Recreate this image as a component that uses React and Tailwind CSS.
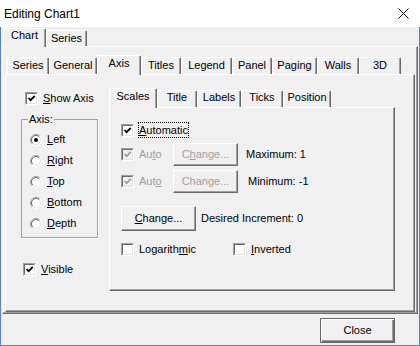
import React from 'react';

const U = ({ children }) => <span className="underline underline-offset-[1px]">{children}</span>;

const raised =
  'border border-t-white border-l-white border-r-[#696969] border-b-[#696969] shadow-[inset_-1px_-1px_#a0a0a0]';

function CheckBox({ checked, disabled }) {
  return (
    <span className="flex h-[13px] w-[13px] shrink-0 items-center justify-center border border-t-[#a0a0a0] border-l-[#a0a0a0] border-r-white border-b-white">
      <span
        className={`flex h-[11px] w-[11px] items-center justify-center border border-t-[#696969] border-l-[#696969] border-r-[#e3e3e3] border-b-[#e3e3e3] ${
          disabled ? 'bg-[#f0f0f0]' : 'bg-white'
        }`}
      >
        {checked && (
          <svg width="9" height="9" viewBox="0 0 9 9">
            <path d="M1.5 4 L3.6 6.2 L7.8 1.8" stroke={disabled ? '#a0a0a0' : '#000'} strokeWidth="1.8" fill="none" />
          </svg>
        )}
      </span>
    </span>
  );
}

function Radio({ checked }) {
  return (
    <svg width="12" height="12" viewBox="0 0 12 12" className="shrink-0">
      <circle cx="6" cy="6" r="5" fill="#fff" />
      <path d="M2.1 9.9 A5.5 5.5 0 0 1 9.9 2.1" stroke="#a0a0a0" fill="none" />
      <path d="M2.8 9.2 A4.5 4.5 0 0 1 9.2 2.8" stroke="#696969" fill="none" />
      <path d="M9.9 2.1 A5.5 5.5 0 0 1 2.1 9.9" stroke="#ffffff" fill="none" />
      <path d="M9.2 2.8 A4.5 4.5 0 0 1 2.8 9.2" stroke="#e3e3e3" fill="none" />
      {checked && <circle cx="6" cy="6" r="2" fill="#000" />}
    </svg>
  );
}

function Tab({ label, className }) {
  return (
    <div
      className={`flex shrink-0 justify-center rounded-t-[2px] border-l border-t border-r border-white border-r-[#696969] shadow-[inset_-1px_0_#a0a0a0] leading-[13px] ${className}`}
    >
      {label}
    </div>
  );
}

function Btn({ children, className, disabled }) {
  return (
    <div
      className={`flex shrink-0 items-center justify-center ${raised} ${disabled ? 'text-[#a0a0a0]' : 'text-black'} ${className}`}
    >
      {children}
    </div>
  );
}

const innerTabs = [
  { label: 'Series', w: 'w-[42px]' },
  { label: 'General', w: 'w-[48px]' },
  { label: 'Axis', w: 'w-[44px]', sel: true },
  { label: 'Titles', w: 'w-[40px]' },
  { label: 'Legend', w: 'w-[51px]' },
  { label: 'Panel', w: 'w-[40px]' },
  { label: 'Paging', w: 'w-[45px]' },
  { label: 'Walls', w: 'w-[42px]' },
  { label: '3D', w: 'w-[42px]' },
];

const subTabs = [
  { label: 'Scales', w: 'w-[48px]', sel: true },
  { label: 'Title', w: 'w-[40px]' },
  { label: 'Labels', w: 'w-[44px]' },
  { label: 'Ticks', w: 'w-[42px]' },
  { label: 'Position', w: 'w-[48px]' },
];

const axes = [
  { pre: '', u: 'L', post: 'eft', checked: true },
  { pre: '', u: 'R', post: 'ight' },
  { pre: '', u: 'T', post: 'op' },
  { pre: '', u: 'B', post: 'ottom' },
  { pre: '', u: 'D', post: 'epth' },
];

export default function App() {
  return (
    <div className="flex h-[346px] w-[420px] flex-col overflow-hidden bg-[#f0f0f0] font-['Liberation_Sans',Arial,sans-serif] text-[11px] text-black">
      {/* title bar */}
      <div className="flex h-[27px] shrink-0 items-center justify-between bg-white pl-[4px] pr-[11px] text-[12px]">
        <span>Editing Chart1</span>
        <svg width="11" height="11" viewBox="0 0 11 11">
          <path d="M0.5 0.5 L10.5 10.5 M10.5 0.5 L0.5 10.5" stroke="#000" strokeWidth="1" />
        </svg>
      </div>

      <div className="flex flex-1 flex-col border-x border-b border-[#5a80c8]">
        <div className="mx-px flex flex-col">
          {/* outer tabs */}
          <div className="flex h-[19px] items-end pl-px">
            <Tab label="Chart" className="relative z-10 -mb-px h-[19px] w-[43px] bg-[#f0f0f0]" />
            <Tab label="Series" className="h-[16px] w-[41px] pt-px" />
          </div>

          <div className={`flex h-[268px] flex-col px-[2px] ${raised}`}>
            {/* inner tabs */}
            <div className="mt-[7px] flex h-[20px] items-end pl-[2px]">
              {innerTabs.map((t) => (
                <Tab
                  key={t.label}
                  label={t.label}
                  className={`${t.w} pt-px ${t.sel ? 'relative z-10 -mb-px h-[20px] bg-[#f0f0f0]' : 'h-[17px]'}`}
                />
              ))}
            </div>

            <div className={`flex h-[238px] ${raised}`}>
              {/* left column */}
              <div className="flex w-[103px] shrink-0 flex-col">
                <div className="ml-[19px] mt-[17px] flex h-[13px] items-center">
                  <CheckBox checked />
                  <span className="ml-[5px]">
                    <U>S</U>how Axis
                  </span>
                </div>

                <div className="relative ml-[15px] mt-[14px] flex w-[77px] flex-col border border-[#a0a0a0] pb-[3px] pt-[9px] shadow-[1px_1px_0_#fff]">
                  <span className="absolute -top-[7px] left-[6px] bg-[#f0f0f0] px-px leading-[13px]">Axis:</span>
                  {axes.map((a) => (
                    <div key={a.post} className="flex h-[21px] items-center pl-[8px]">
                      <Radio checked={a.checked} />
                      <span className="ml-[5px]">
                        <U>{a.u}</U>
                        {a.post}
                      </span>
                    </div>
                  ))}
                </div>

                <div className="ml-[17px] mt-[25px] flex h-[13px] items-center">
                  <CheckBox checked />
                  <span className="ml-[5px]">
                    <U>V</U>isible
                  </span>
                </div>
              </div>

              {/* right column */}
              <div className="flex flex-col">
                <div className="mt-[12px] flex h-[20px] items-end">
                  {subTabs.map((t) => (
                    <Tab
                      key={t.label}
                      label={t.label}
                      className={`${t.w} ${t.sel ? 'relative z-10 -mb-px h-[20px] bg-[#f0f0f0] pt-px' : 'h-[17px]'}`}
                    />
                  ))}
                </div>

                <div className={`flex h-[184px] w-[286px] flex-col pl-[11px] ${raised}`}>
                  <div className="mt-[14px] flex h-[16px] items-center">
                    <CheckBox checked />
                    <span className="ml-[4px] h-[16px] border border-dotted border-black leading-[14px]">
                      <U>A</U>utomatic
                    </span>
                  </div>

                  <div className="mt-[5px] flex h-[23px] items-center">
                    <div className="flex w-[52px] items-center">
                      <CheckBox checked disabled />
                      <span className="ml-[5px] text-[#a0a0a0]">
                        Au<U>t</U>o
                      </span>
                    </div>
                    <Btn disabled className="h-[23px] w-[65px]">
                      C<U>h</U>ange...
                    </Btn>
                    <span className="ml-[8px]">Maximum: 1</span>
                  </div>

                  <div className="mt-[4px] flex h-[23px] items-center">
                    <div className="flex w-[52px] items-center">
                      <CheckBox checked disabled />
                      <span className="ml-[5px] text-[#a0a0a0]">
                        Aut<U>o</U>
                      </span>
                    </div>
                    <Btn disabled className="h-[23px] w-[65px]">
                      Change...
                    </Btn>
                    <span className="ml-[10px]">Minimum: -1</span>
                  </div>

                  <div className="mt-[13px] flex h-[25px] items-center">
                    <Btn className="h-[25px] w-[75px]">
                      <U>C</U>hange...
                    </Btn>
                    <span className="ml-[5px]">Desired Increment: 0</span>
                  </div>

                  <div className="mt-[12px] flex h-[13px] items-center">
                    <div className="flex w-[112px] items-center">
                      <CheckBox />
                      <span className="ml-[5px]">
                        Logarith<U>m</U>ic
                      </span>
                    </div>
                    <CheckBox />
                    <span className="ml-[5px]">
                      <U>I</U>nverted
                    </span>
                  </div>
                </div>
              </div>
            </div>
          </div>
        </div>

        {/* footer */}
        <div className="flex justify-end pr-[24px] pt-[4px]">
          <div className="flex h-[25px] w-[75px] items-center justify-center border border-[#696969] shadow-[inset_1px_1px_#fff,inset_-1px_-1px_#696969,inset_-2px_-2px_#a0a0a0]">
            Close
          </div>
        </div>
      </div>
    </div>
  );
}
